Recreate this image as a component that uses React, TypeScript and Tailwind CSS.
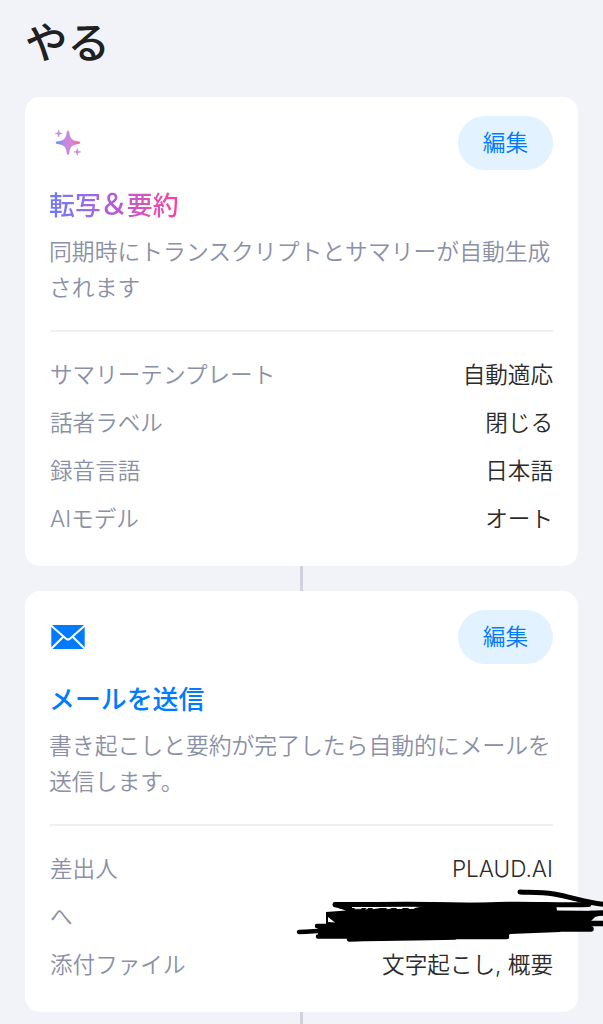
import type { ReactNode } from "react";

type Row = { label: string; value?: string };

function SparkleIcon() {
  return (
    <svg width="36" height="36" viewBox="0 0 36 36" fill="none">
      <defs>
        <linearGradient id="sparkle-main" x1="6" y1="0" x2="30" y2="0" gradientUnits="userSpaceOnUse">
          <stop offset="0" stopColor="#5a8cff" />
          <stop offset="0.35" stopColor="#bd8ae2" />
          <stop offset="0.65" stopColor="#d287d4" />
          <stop offset="1" stopColor="#ff5c98" />
        </linearGradient>
      </defs>
      <path d="M18 5.8c.7 0 .95.7 1.1 1.7.9 6.2 2.9 8.2 9.2 9.1 1 .15 1.7.4 1.7 1.1s-.7.95-1.7 1.1c-6.3.9-8.3 2.9-9.2 9.2-.15 1-.4 1.7-1.1 1.7s-.95-.7-1.1-1.7c-.9-6.3-2.9-8.3-9.2-9.2-1-.15-1.7-.4-1.7-1.1s.7-.95 1.7-1.1c6.3-.9 8.3-2.9 9.2-9.1.15-1 .4-1.7 1.1-1.7z" fill="url(#sparkle-main)" stroke="url(#sparkle-main)" strokeWidth=".4" />
      <path d="M8.7 4.9c.3 2.6.8 3.2 3.4 3.5-2.6.3-3.1.9-3.4 3.5-.3-2.6-.8-3.2-3.4-3.5 2.6-.3 3.1-.9 3.4-3.5z" fill="#c788dc" stroke="#c788dc" strokeWidth=".6" />
      <path d="M27.3 23.4c.3 2.6.8 3.2 3.4 3.5-2.6.3-3.1.9-3.4 3.5-.3-2.6-.8-3.2-3.4-3.5 2.6-.3 3.1-.9 3.4-3.5z" fill="#c788dc" stroke="#c788dc" strokeWidth=".6" />
    </svg>
  );
}

function MailIcon() {
  return (
    <svg width="36" height="36" viewBox="0 0 36 36" fill="none">
      <rect x="1.3" y="6" width="33.4" height="24" rx="1.8" fill="#007aff" />
      <path d="M1 6.5L15.8 19.6Q18 21.6 20.2 19.6L35 6.5M1.5 29.5L13.3 17.7M34.5 29.5L22.7 17.7" stroke="white" strokeWidth="2" />
    </svg>
  );
}

function Scribble() {
  return (
    <svg className="absolute left-[290px] top-[880px]" width="313" height="70" viewBox="0 0 313 70" fill="none" stroke="black" strokeWidth="4.5" strokeLinecap="round" strokeLinejoin="round">
      <path d="M230 12C239 12.5 250 12 264 14C282 17 296 23 315 24.5" strokeWidth="5" />
      <path d="M45 24.5C75 25 110 23.5 145 24.5C170 25.5 190 25.5 207 24.5C240 23.5 270 25.5 299 24.5" strokeWidth="5" />
      <path d="M9 52C35 51 48 49 75 48M28 56.5H60M59 59.5C90 58 120 59 165 57.5M150 57H217M45 25L60 28M27 46H38" />
      <path d="M300 33.5L315 33M290 43.5H315M260 49H301" strokeWidth="5.5" />
      <path d="M36 32L56 30.5L48 28L62 28L125 28L150 22.5L205 23L266 24L267 30.5L313 31V35L305 37L301 41V49L271 50.5L270 52L220 54L216 58.5L160 59L95 60L58 60V57L28 57V50L27 45L36 44ZM38 37V42L45 42.5Z" fill="black" fillRule="evenodd" stroke="none" />
      <path d="M65 28.7H71M76 29L78 28M83 28.7L89 27.8M97 28.7L101 28M107 28.5H112M119 28.4H124" stroke="white" strokeWidth="1" />
    </svg>
  );
}

function ActionCard({ icon, title, description, rows }: { icon: ReactNode; title: ReactNode; description: string; rows: Row[] }) {
  return (
    <section className="rounded-[15px] bg-white px-[25px] pt-[19px] pb-[23px]">
      <div className="flex h-[53px] items-center justify-between">
        {icon}
        <button className="h-[54px] w-[95px] rounded-full bg-[#e3f2ff] pt-0.5 text-[22.7px] font-[350] text-[#007aff]">編集</button>
      </div>
      <h2 className="mt-[19px] -ml-px h-9 text-[25.9px] leading-9 font-medium whitespace-nowrap">{title}</h2>
      <p className="mt-[11px] -mr-2 -ml-px h-[72px] text-[22.82px] leading-[35.5px] font-[350] text-[#8a90a5]">{description}</p>
      <div className="mt-[23px] border-t-2 border-[#eff0f3]" />
      <dl className="mt-[19px] text-[22.6px] font-[350]">
        {rows.map((row) => (
          <div key={row.label} className="flex h-12 items-center justify-between">
            <dt className="text-[#8a90a5]">{row.label}</dt>
            <dd className="text-[#2b2b2b]">{row.value}</dd>
          </div>
        ))}
      </dl>
    </section>
  );
}

function Connector() {
  return <div className="mx-auto h-[25px] w-[3px] bg-[#d1d2de]" />;
}

export default function App() {
  return (
    <main lang="ja" className="relative h-[1024px] w-[603px] overflow-hidden bg-[#f2f3f8] px-[25px] font-['Inter','Noto_Sans_CJK_JP',sans-serif]">
      <h1 className="flex h-[97px] items-center pb-3 text-[42.5px] font-medium text-[#202020]">やる</h1>
      <ActionCard
        icon={<SparkleIcon />}
        title={
          <span className="bg-linear-to-r from-[#687aff] via-[#b45bd5] to-[#ff3c9d] bg-clip-text text-transparent">
            転写<span className="-mx-[1.5px] text-[29px] leading-none">＆</span>要約
          </span>
        }
        description="同期時にトランスクリプトとサマリーが自動生成されます"
        rows={[
          { label: "サマリーテンプレート", value: "自動適応" },
          { label: "話者ラベル", value: "閉じる" },
          { label: "録音言語", value: "日本語" },
          { label: "AIモデル", value: "オート" },
        ]}
      />
      <Connector />
      <ActionCard
        icon={<MailIcon />}
        title={<span className="text-[#007aff]">メールを送信</span>}
        description="書き起こしと要約が完了したら自動的にメールを送信します。"
        rows={[
          { label: "差出人", value: "PLAUD.AI" },
          { label: "へ" },
          { label: "添付ファイル", value: "文字起こし, 概要" },
        ]}
      />
      <Connector />
      <Scribble />
    </main>
  );
}
